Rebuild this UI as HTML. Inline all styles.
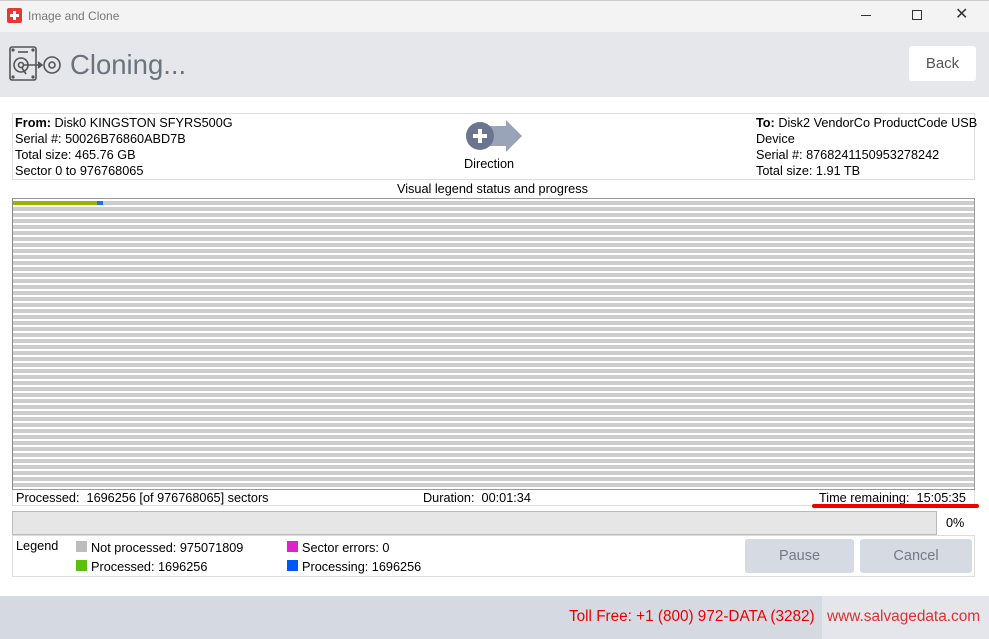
<!DOCTYPE html>
<html><head><meta charset="utf-8"><style>
*{margin:0;padding:0;box-sizing:border-box}
body{width:989px;height:639px;overflow:hidden;background:#fff;font-family:"Liberation Sans",Tahoma,sans-serif;font-size:12.7px;color:#000;position:relative}
.a{position:absolute}
</style></head><body>
<div class="a" style="left:0;top:0;width:989px;height:32px;background:#f3f3f3;border-top:1px solid #ccc"></div>
<div class="a" style="left:7px;top:8px;width:15px;height:15px;background:#e53935;border-radius:2px"></div>
<div class="a" style="left:10px;top:14px;width:9px;height:3px;background:#fff"></div>
<div class="a" style="left:13px;top:11px;width:3px;height:9px;background:#fff"></div>
<div class="a" style="left:28px;top:9px;color:#777;font-size:12px">Image and Clone</div>
<div class="a" style="left:861px;top:15px;width:10px;height:1px;background:#333"></div>
<div class="a" style="left:912px;top:10px;width:10px;height:10px;border:1px solid #333"></div>
<div class="a" style="left:955px;top:4px;font-size:16px;color:#333">✕</div>

<div class="a" style="left:0;top:32px;width:989px;height:65px;background:#e5e7eb"></div>
<svg class="a" style="left:8px;top:46px" width="54" height="36" viewBox="0 0 54 36" fill="none" stroke="#555" stroke-width="1.6">
<rect x="2" y="1" width="26" height="33" rx="2"/><line x1="10" y1="6" x2="20" y2="6"/>
<circle cx="13" cy="19" r="7"/><circle cx="13" cy="19" r="2.5"/><line x1="14" y1="22" x2="18" y2="28"/>
<line x1="16" y1="19" x2="33" y2="19"/><path d="M30 16 L34 19 L30 22" fill="#555"/>
<circle cx="44" cy="19" r="8"/><circle cx="44" cy="19" r="3"/>
<circle cx="5" cy="4" r=".8" fill="#555"/><circle cx="25" cy="4" r=".8" fill="#555"/><circle cx="5" cy="31" r=".8" fill="#555"/><circle cx="25" cy="31" r=".8" fill="#555"/>
</svg>
<div class="a" style="left:70px;top:49px;font-size:27.5px;color:#6b7280">Cloning...</div>
<div class="a" style="left:909px;top:46px;width:67px;height:35px;background:#fff;border-radius:3px;font-size:15px;color:#555;text-align:center;line-height:35px">Back</div>

<div class="a" style="left:12px;top:113px;width:963px;height:67px;border:1px solid #ddd"></div>
<div class="a" style="left:15px;top:115px;line-height:16px"><b>From:</b> Disk0 KINGSTON SFYRS500G<br>Serial #: 50026B76860ABD7B<br>Total size: 465.76 GB<br>Sector 0 to 976768065</div>
<svg class="a" style="left:464px;top:120px" width="58" height="32" viewBox="0 0 58 32">
<path d="M14 6 H42 V0 L58 16 L42 32 V26 H14 Z" fill="#9aa4b8"/>
<circle cx="16" cy="16" r="14" fill="#6b7590"/><rect x="9" y="14" width="14" height="4" fill="#fff"/><rect x="14" y="9" width="4" height="14" fill="#fff"/>
</svg>
<div class="a" style="left:464px;top:157px">Direction</div>
<div class="a" style="left:756px;top:115px;line-height:16px"><b>To:</b> Disk2 VendorCo ProductCode USB<br>Device<br>Serial #: 8768241150953278242<br>Total size: 1.91 TB</div>
<div class="a" style="left:397px;top:182px">Visual legend status and progress</div>

<div class="a" style="left:12px;top:198px;width:963px;height:292px;border:1px solid #999;border-left-color:#888;background:#fff"></div>
<div class="a" style="left:13px;top:201px;width:961px;height:287px;background:repeating-linear-gradient(to bottom,#cdcdcd 0,#cdcdcd 4px,#fff 4px,#fff 6px)"></div>
<div class="a" style="left:13px;top:201px;width:84px;height:4px;background:#9ab300"></div>
<div class="a" style="left:97px;top:201px;width:6px;height:4px;background:#1a73e8"></div>

<div class="a" style="left:12px;top:490px;width:963px;height:16px;border:1px solid #ddd;border-top:none"></div>
<div class="a" style="left:16px;top:491px">Processed:&nbsp; 1696256 [of 976768065] sectors</div>
<div class="a" style="left:423px;top:491px">Duration:&nbsp; 00:01:34</div>
<div class="a" style="left:819px;top:491px">Time remaining:&nbsp; 15:05:35</div>
<div class="a" style="left:812px;top:504px;width:167px;height:4px;background:#e00;border-radius:2px"></div>

<div class="a" style="left:12px;top:511px;width:925px;height:24px;background:#e6e6e6;border:1px solid #bbb"></div>
<div class="a" style="left:946px;top:516px">0%</div>

<div class="a" style="left:12px;top:535px;width:963px;height:42px;border:1px solid #ddd"></div>
<div class="a" style="left:16px;top:539px">Legend</div>
<div class="a" style="left:76px;top:541px;width:11px;height:11px;background:#bdbdbd"></div>
<div class="a" style="left:91px;top:541px">Not processed: 975071809</div>
<div class="a" style="left:76px;top:560px;width:11px;height:11px;background:#5cbf0c"></div>
<div class="a" style="left:91px;top:560px">Processed: 1696256</div>
<div class="a" style="left:287px;top:541px;width:11px;height:11px;background:#dd22cc"></div>
<div class="a" style="left:302px;top:541px">Sector errors: 0</div>
<div class="a" style="left:287px;top:560px;width:11px;height:11px;background:#0055ff"></div>
<div class="a" style="left:302px;top:560px">Processing: 1696256</div>
<div class="a" style="left:745px;top:539px;width:109px;height:34px;background:#d6dae3;border-radius:3px;color:#778;font-size:14.5px;text-align:center;line-height:34px">Pause</div>
<div class="a" style="left:860px;top:539px;width:112px;height:34px;background:#d6dae3;border-radius:3px;color:#778;font-size:14.5px;text-align:center;line-height:34px">Cancel</div>

<div class="a" style="left:0;top:596px;width:989px;height:43px;background:#d5d9e2"></div>
<div class="a" style="left:822px;top:596px;width:167px;height:43px;background:#e4e6ec"></div>
<div class="a" style="left:569px;top:608px;color:#e00;font-size:15.3px">Toll Free: +1 (800) 972-DATA (3282)</div>
<div class="a" style="left:827px;top:608px;color:#e03030;font-size:15.4px">www.salvagedata.com</div>
</body></html>
